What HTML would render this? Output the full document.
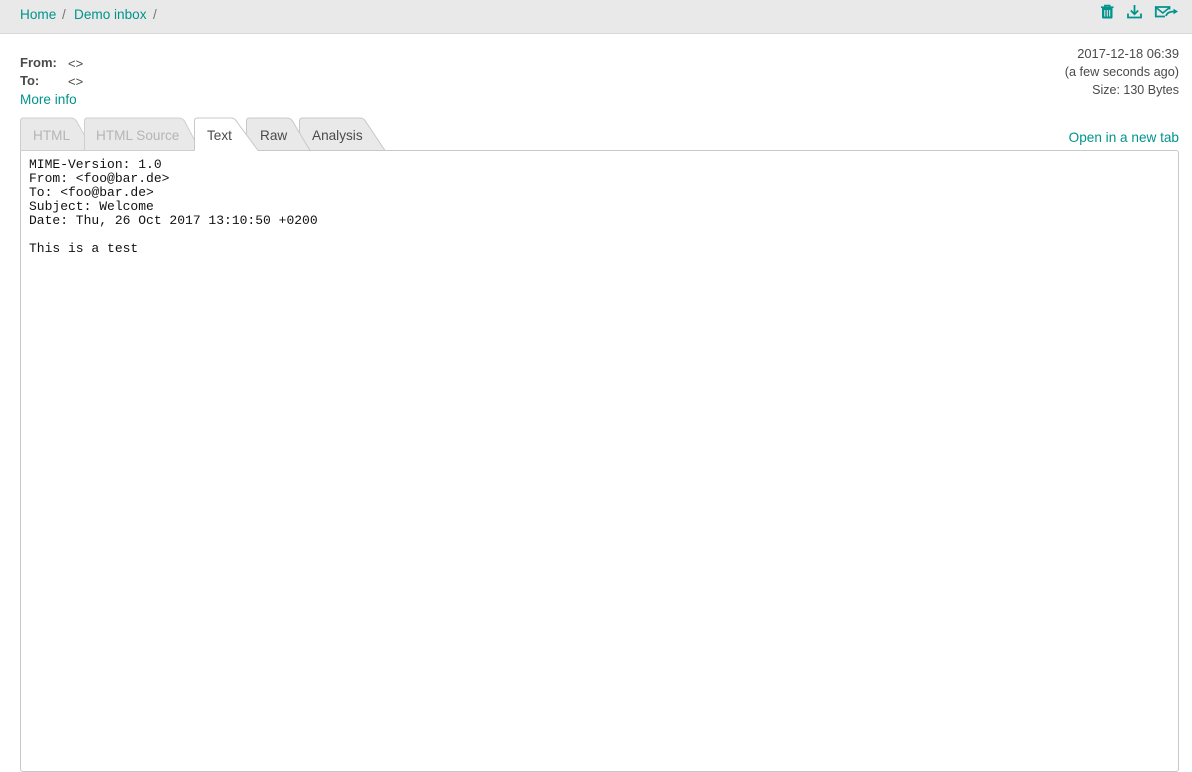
<!DOCTYPE html>
<html lang="en">
<head>
<meta charset="utf-8">
<title>Demo inbox</title>
<style>
html,body{margin:0;padding:0;background:#fff;}
body{width:1192px;height:772px;overflow:hidden;position:relative;font-family:"Liberation Sans",sans-serif;font-size:13.6px;color:#4a4a4a;}
.t{position:absolute;white-space:pre;line-height:18px;}
a{color:#00948c;text-decoration:none;}
.bar{position:absolute;left:0;top:0;width:1192px;height:33px;background:#e9e9e9;border-bottom:1px solid #d8d8d8;}
.box{position:absolute;left:20px;top:150px;width:1157px;height:620px;border:1px solid #c8c8c8;border-radius:0 3px 3px 3px;}
pre{position:absolute;left:29px;top:158px;margin:0;font:13px/14px "Liberation Mono",monospace;color:#111;}
svg{position:absolute;}
.tab{font-size:13.6px;}
.r{font-size:12.9px;}
</style>
</head>
<body>
<div class="bar"></div>
<a class="t" style="left:20px;top:6px" href="#">Home</a>
<span class="t" style="left:62px;top:6px;color:#777">/</span>
<a class="t" style="left:74px;top:6px" href="#">Demo inbox</a>
<span class="t" style="left:153px;top:6px;color:#777">/</span>

<svg style="left:1095px;top:0" width="90" height="24" viewBox="0 0 90 24" fill="none">
  <path d="M6 7.200h12.500" stroke="#00948c" stroke-width="1.600"/>
  <path d="M9.800 7V5.500h5V7" stroke="#00948c" stroke-width="1.400"/>
  <path d="M7 8h10.500v9.500a1 1 0 0 1-1 1H8a1 1 0 0 1-1-1z" fill="#00948c"/>
  <path d="M9.800 10v6.500M12.250 10v6.500M14.700 10v6.500" stroke="#e9e9e9" stroke-width="1"/>
  <path d="M39.500 5v9M35.800 10.500l3.700 3.700 3.700-3.700" stroke="#00948c" stroke-width="1.800"/>
  <path d="M33 13.500v4h13v-4" stroke="#00948c" stroke-width="1.800"/>
  <path d="M70 16.500h-9.200V7h13.700v2.500" stroke="#00948c" stroke-width="1.800"/>
  <path d="M61 7.500l6.800 5.500 6.800-5.500" stroke="#00948c" stroke-width="1.600"/>
  <path d="M71 16c1-3.500 4-4.500 8-4.500" stroke="#00948c" stroke-width="1.700"/>
  <path d="M78.500 8.800l4.500 2.700-4.500 2.700z" fill="#00948c"/>
</svg>

<span class="t" style="left:20px;top:54px;font-weight:bold;font-size:13px">From:</span>
<span class="t" style="left:68px;top:55px;font-size:13px">&lt;&gt;</span>
<span class="t" style="left:20px;top:72px;font-weight:bold;font-size:13px">To:</span>
<span class="t" style="left:68px;top:73px;font-size:13px">&lt;&gt;</span>
<a class="t" style="left:20px;top:90.500px" href="#">More info</a>

<span class="t r" style="right:13px;top:45px">2017-12-18 06:39</span>
<span class="t r" style="right:13px;top:63px;font-size:12.700px">(a few seconds ago)</span>
<span class="t r" style="right:13px;top:81px;font-size:12.500px">Size: 130 Bytes</span>
<a class="t" style="right:13px;top:129px" href="#">Open in a new tab</a>

<div class="box"></div>
<svg style="left:0;top:110px" width="400" height="42" viewBox="0 0 400 42">
  <path d="M20.500 40.500V11q0-3 3-3H71q4 0 6 4L93 40.500z" fill="#e9e9e9" stroke="#cfcfcf"/>
  <path d="M84.500 40.500V11q0-3 3-3H179q4 0 6 4L200 40.500z" fill="#e9e9e9" stroke="#cfcfcf"/>
  <path d="M299.500 40.500V11q0-3 3-3H360q4 0 6 4L385 40.500z" fill="#e9e9e9" stroke="#c8c8c8"/>
  <path d="M246.500 40.500V11q0-3 3-3H287q4 0 6 4L310 40.500z" fill="#e9e9e9" stroke="#c8c8c8"/>
  <path d="M194.500 41V11q0-3 3-3H231q4 0 6 4L258 41z" fill="#fff"/>
  <path d="M194.500 40.500V11q0-3 3-3H231q4 0 6 4L258 40.500" fill="none" stroke="#c8c8c8"/>
</svg>
<span class="t tab" style="left:33px;top:127px;color:#b5b5b5">HTML</span>
<span class="t tab" style="left:96px;top:127px;color:#b5b5b5">HTML Source</span>
<span class="t tab" style="left:207px;top:127px">Text</span>
<span class="t tab" style="left:260px;top:127px">Raw</span>
<span class="t tab" style="left:312px;top:127px">Analysis</span>

<pre>MIME-Version: 1.0
From: &lt;foo@bar.de&gt;
To: &lt;foo@bar.de&gt;
Subject: Welcome
Date: Thu, 26 Oct 2017 13:10:50 +0200

This is a test</pre>
</body>
</html>
